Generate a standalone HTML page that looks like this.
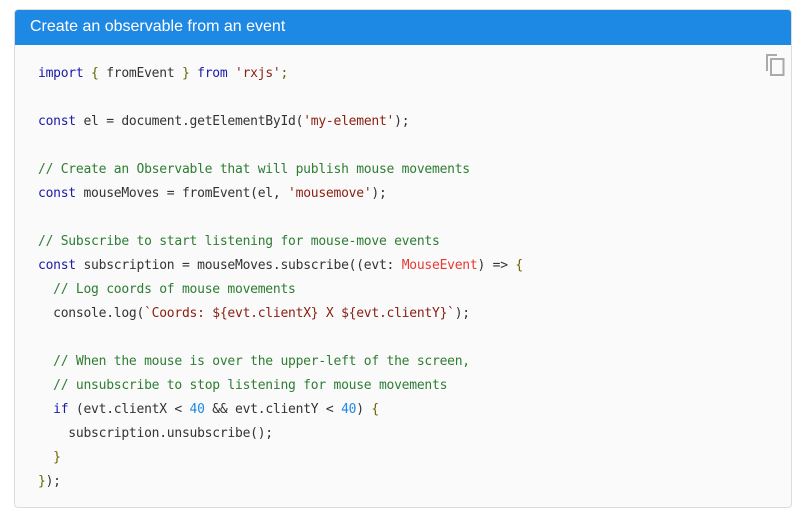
<!DOCTYPE html>
<html><head><meta charset="utf-8"><style>
html,body{margin:0;padding:0;background:#fff;width:804px;height:520px;overflow:hidden}
.box{position:absolute;left:14px;top:9px;width:776px;height:497px;border:1px solid #dcdcdc;border-radius:4px;background:#fafafa;overflow:hidden}
.hd{height:35px;background:#1e88e5;color:#fff;font:16px "Liberation Sans",sans-serif;line-height:34px;padding-left:15px}
pre{margin:0;position:absolute;left:23px;top:52px;font:13px/24px "DejaVu Sans Mono","Liberation Mono",monospace;letter-spacing:-0.25px;color:#333}
.k{color:#1a1aa6}.s{color:#8a1f11}.c{color:#2e7d32}.p{color:#666600}.t{color:#e53935}.n{color:#1e88e5}
.cp{position:absolute;left:750px;top:43px}
</style></head><body>
<div class="box">
<div class="hd">Create an observable from an event</div>
<svg class="cp" width="22" height="24" viewBox="0 0 22 24"><path d="M1 1h11v2H3v15H1z" fill="#aaa"/><rect x="6" y="6" width="12.5" height="16" fill="none" stroke="#aaa" stroke-width="2"/></svg>
<pre><span class="k">import</span> <span class="p">{</span> fromEvent <span class="p">}</span> <span class="k">from</span> <span class="s">'rxjs'</span><span class="p">;</span>

<span class="k">const</span> el = document.getElementById(<span class="s">'my-element'</span>);

<span class="c">// Create an Observable that will publish mouse movements</span>
<span class="k">const</span> mouseMoves = fromEvent(el, <span class="s">'mousemove'</span>);

<span class="c">// Subscribe to start listening for mouse-move events</span>
<span class="k">const</span> subscription = mouseMoves.subscribe((evt: <span class="t">MouseEvent</span>) =&gt; <span class="p">{</span>
  <span class="c">// Log coords of mouse movements</span>
  console.log(<span class="s">`Coords: ${evt.clientX} X ${evt.clientY}`</span>);

  <span class="c">// When the mouse is over the upper-left of the screen,</span>
  <span class="c">// unsubscribe to stop listening for mouse movements</span>
  <span class="k">if</span> (evt.clientX &lt; <span class="n">40</span> &amp;&amp; evt.clientY &lt; <span class="n">40</span>) <span class="p">{</span>
    subscription.unsubscribe();
  <span class="p">}</span>
<span class="p">}</span>);</pre>
</div>
</body></html>
